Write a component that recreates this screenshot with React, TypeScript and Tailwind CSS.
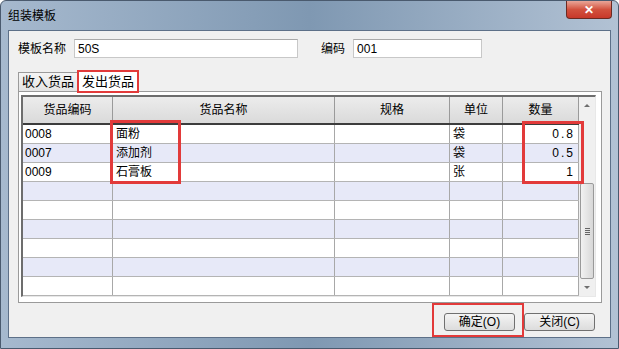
const font = { fontFamily: '"Liberation Sans", "Noto Sans CJK SC", sans-serif' }

const rows = [
  { code: '0008', name: '面粉', spec: '', unit: '袋', qty: '0.8' },
  { code: '0007', name: '添加剂', spec: '', unit: '袋', qty: '0.5' },
  { code: '0009', name: '石膏板', spec: '', unit: '张', qty: '1' },
  null,
  null,
  null,
  null,
  null,
  null,
]

const cols = 'grid grid-cols-[90px_222px_115px_53px_76px]'

function Grid() {
  return (
    <div className="flex h-[202px] w-[575px] border-l-2 border-t-2 border-l-[#6d6d6d] border-t-[#6d6d6d] border-r border-b border-r-[#e8e8e8] border-b-[#e8e8e8] bg-white">
      <div className="flex flex-col">
        {/* header */}
        <div className={`${cols} h-[28px] border-b-2 border-[#3c3c3c] bg-gradient-to-b from-[#ececec] to-[#dadada] text-[12px] text-black`}>
          {['货品编码', '货品名称', '规格', '单位', '数量'].map((h) => (
            <div key={h} className="flex items-center justify-center border-r border-[#9a9a9a]">
              {h}
            </div>
          ))}
        </div>
        {rows.map((r, i) => (
          <div
            key={i}
            className={`${cols} h-[19px] border-b border-[#b4b4b4] text-[12px] leading-[18px] text-black ${i % 2 === 1 ? 'bg-[#e7e9f8]' : 'bg-white'}`}
          >
            <div className="border-r border-[#a8a8a8] pl-[2px]">{r?.code}</div>
            <div className="border-r border-[#a8a8a8] pl-[3px]">{r?.name}</div>
            <div className="border-r border-[#a8a8a8]">{r?.spec}</div>
            <div className="border-r border-[#a8a8a8] pl-[3px]">{r?.unit}</div>
            <div className="border-r border-[#a8a8a8] pr-[3px] text-right tracking-[2px]">{r?.qty}</div>
          </div>
        ))}
      </div>
      {/* scrollbar */}
      <div className="flex w-[17px] flex-col items-center bg-[#f0f0f0]">
        <div className="flex h-[16px] items-center justify-center">
          <div className="h-0 w-0 border-x-[3px] border-b-[3px] border-x-transparent border-b-[#6e6e6e]" />
        </div>
        <div className="h-[70px]" />
        <div className="flex h-[96px] w-[14px] items-center justify-center rounded-[2px] border border-[#9a9a9a] bg-gradient-to-r from-[#f2f2f2] to-[#d8d8d8]">
          <div className="flex flex-col gap-[1px]">
            <div className="h-px w-[5px] bg-[#666]" />
            <div className="h-px w-[5px] bg-[#666]" />
            <div className="h-px w-[5px] bg-[#666]" />
            <div className="h-px w-[5px] bg-[#666]" />
          </div>
        </div>
        <div className="flex flex-1 items-center justify-center">
          <div className="h-0 w-0 border-x-[3px] border-t-[3px] border-x-transparent border-t-[#6e6e6e]" />
        </div>
      </div>
    </div>
  )
}

function Button({ label }: { label: string }) {
  return (
    <button className="flex h-[18px] w-[71px] items-center justify-center rounded-[3px] border border-[#707070] bg-gradient-to-b from-[#f4f4f4] to-[#dcdcdc] text-[12px] text-black">
      {label}
    </button>
  )
}

export default function App() {
  return (
    <div
      style={font}
      className="relative flex h-[349px] w-[619px] flex-col overflow-hidden rounded-t-[6px] border border-[#4a5a6e] bg-gradient-to-r from-[#a6b9ce] via-[#7f98b2] to-[#b2c2d4]"
    >
      {/* title bar */}
      <div className="flex h-[29px] items-start justify-between pl-[7px] pr-[6px]">
        <span className="pt-[6px] text-[12px] text-black">组装模板</span>
        <div className="flex h-[18px] w-[46px] items-center justify-center rounded-b-[4px] border border-t-0 border-[#6b2a22] bg-gradient-to-b from-[#e8a598] via-[#d2513e] to-[#c8382a] text-[12px] font-bold text-white">
          ✕
        </div>
      </div>

      {/* client */}
      <div className="mx-[7px] flex h-[308px] flex-col border border-[#5d7088] bg-[#f0f0f0] text-[12px] text-black">
        <div className="mt-[8px] flex h-[19px] items-center pl-[9px]">
          <span>模板名称</span>
          <div className="ml-[8px] flex h-[19px] w-[224px] items-center border border-[#c8c8c8] border-t-[#a8a8a8] bg-white pl-[3px]">50S</div>
          <span className="ml-[23px]">编码</span>
          <div className="ml-[8px] flex h-[19px] w-[129px] items-center border border-[#c8c8c8] border-t-[#a8a8a8] bg-white pl-[3px]">001</div>
        </div>

        {/* tabs */}
        <div className="ml-[9px] mt-[11px] flex h-[22px] items-end">
          <div className="flex h-[19px] w-[60px] items-center justify-center border border-b-0 border-[#9a9a9a] bg-gradient-to-b from-[#f4f4f4] to-[#e4e4e4] text-[13px]">
            收入货品
          </div>
          <div className="relative -mb-px flex h-[22px] w-[60px] items-center justify-center border border-b-0 border-[#9a9a9a] bg-white text-[13px]">
            发出货品
            <div className="absolute -left-[2px] -top-[1px] h-[23px] w-[62px] border-[2px] border-[#e23a3a]" />
          </div>
        </div>
        <div className="mx-[9px] flex h-[212px] w-[584px] items-start border border-[#9a9a9a] bg-white pl-[2px] pt-[3px]">
          <Grid />
        </div>

        {/* buttons */}
        <div className="mt-[10px] flex justify-end gap-[9px] pr-[15px]">
          <div className="relative">
            <Button label="确定(O)" />
            <div className="absolute -left-[12px] -top-[10px] h-[34px] w-[92px] border-[2px] border-[#e23a3a]" />
          </div>
          <Button label="关闭(C)" />
        </div>
      </div>

      {/* red highlight boxes over the grid */}
      <div className="absolute left-[109px] top-[119px] h-[64px] w-[71px] border-[3px] border-[#e23a3a]" />
      <div className="absolute left-[521px] top-[120px] h-[63px] w-[62px] border-[3px] border-[#e23a3a]" />
    </div>
  )
}
